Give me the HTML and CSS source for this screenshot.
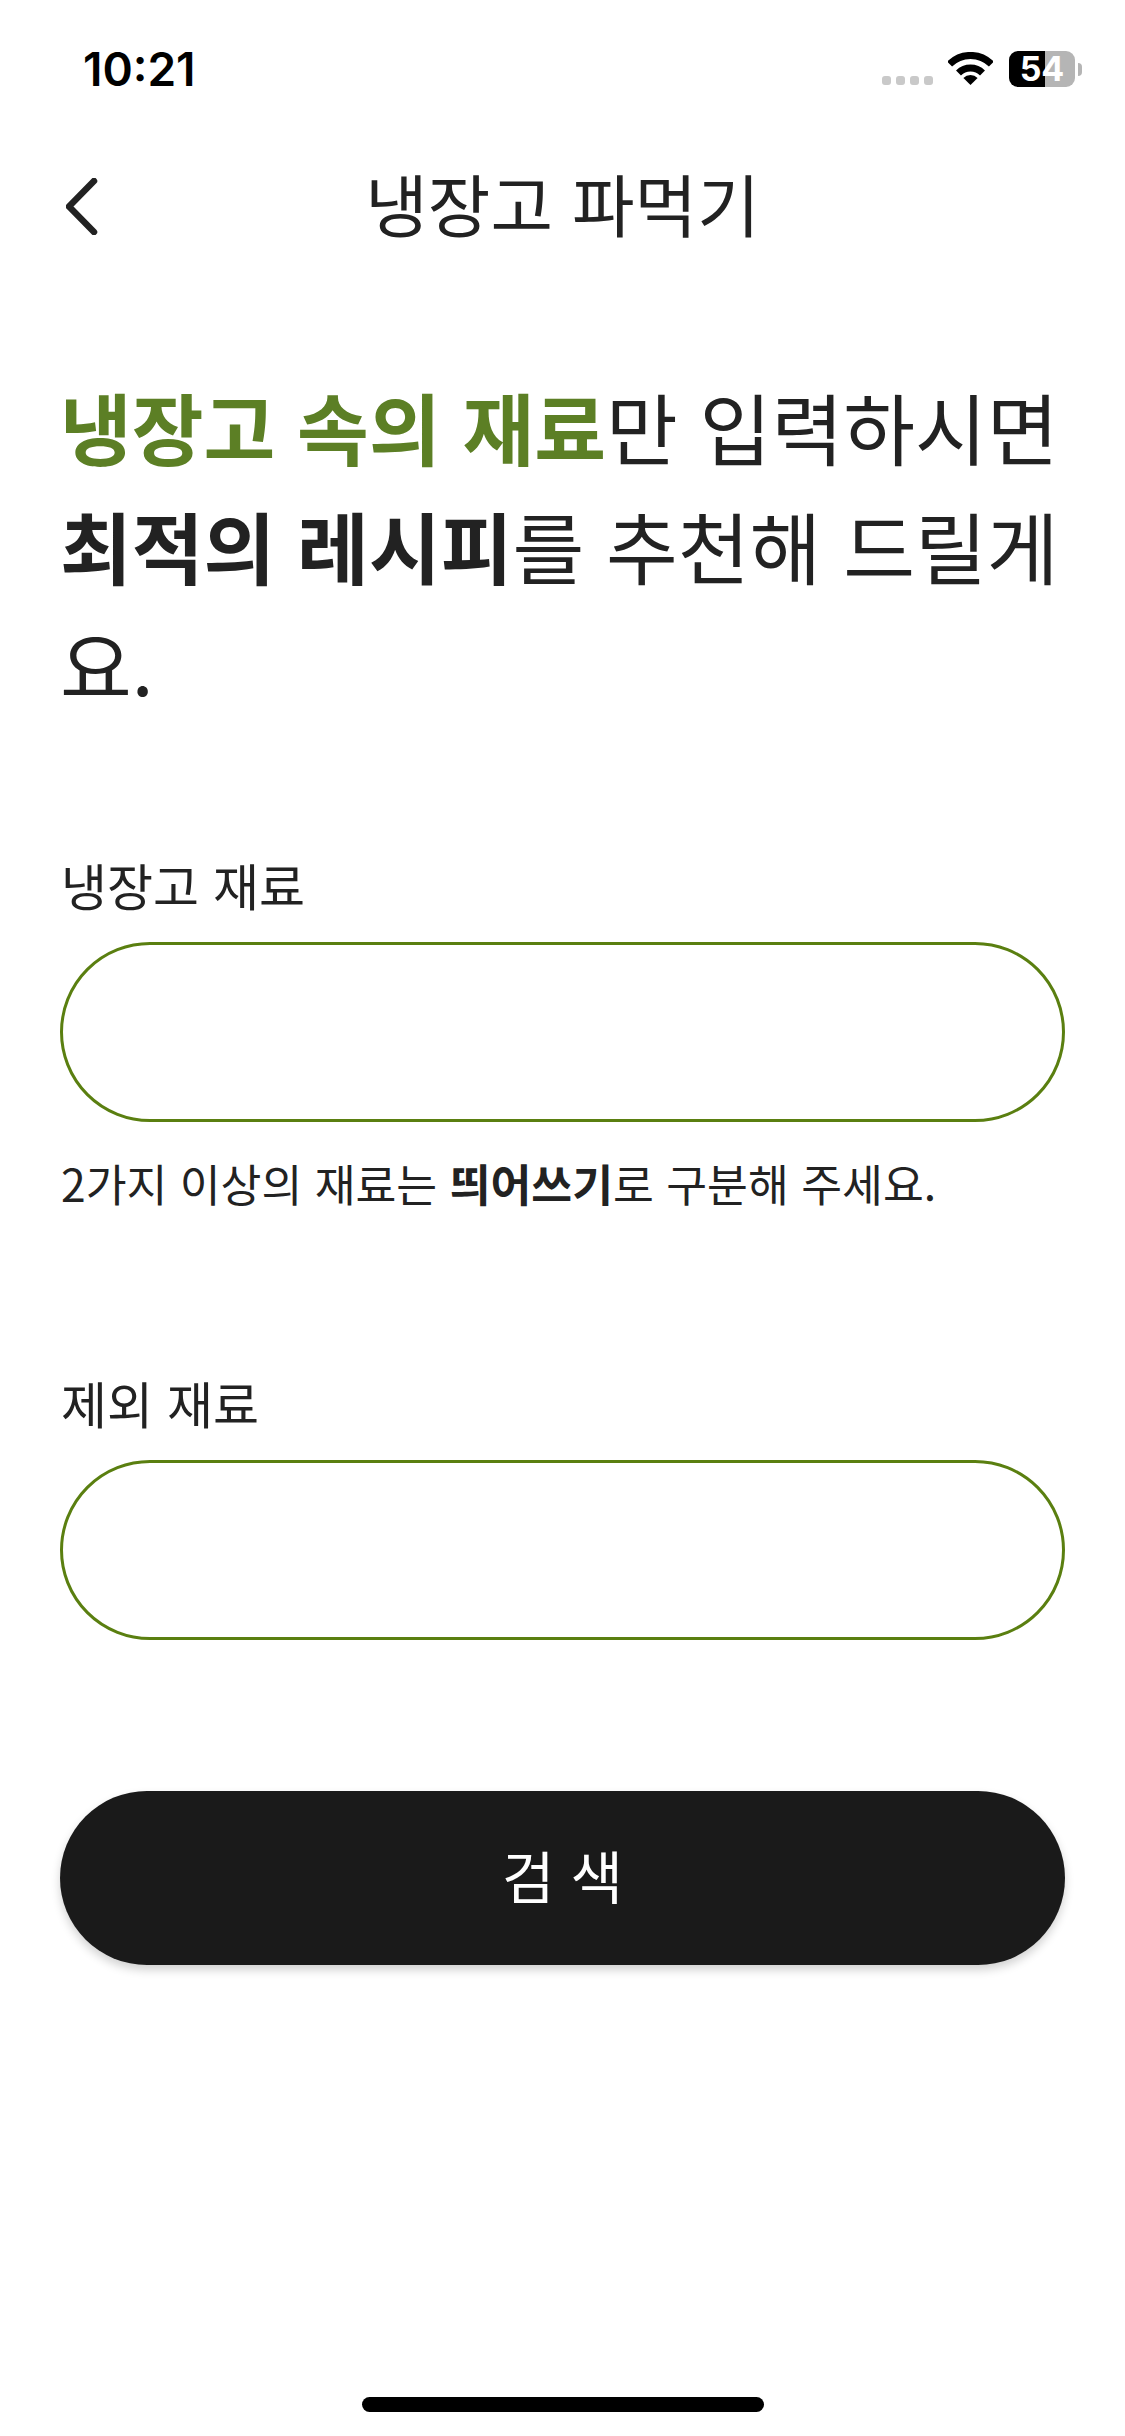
FILE: index.html
```html
<!DOCTYPE html>
<html lang="ko">
<head>
<meta charset="utf-8">
<title>냉장고 파먹기</title>
<link rel="stylesheet" href="styles.css">
</head>
<body>
<div class="screen">
  <div class="status-bar">
    <span class="time">10:21</span>
    <div class="status-icons">
      <div class="signal"><i></i><i></i><i></i><i></i></div>
      <svg class="wifi" viewBox="0 0 45 33" aria-hidden="true">
        <path d="M22.5 33 15.4 25.9A10 10 0 0 1 29.6 25.9Z" fill="#000"/>
        <path d="M10.5 21A17 17 0 0 1 34.5 21M1.6 12.1A29.5 29.5 0 0 1 43.4 12.1" fill="none" stroke="#000" stroke-width="7"/>
      </svg>
      <div class="battery">
        <div class="battery-body"><span class="battery-text">54</span></div>
        <div class="battery-cap"></div>
      </div>
    </div>
  </div>

  <header class="nav">
    <button class="back" aria-label="뒤로">
      <svg viewBox="0 0 35 57" aria-hidden="true">
        <path d="M28 3 3 28.5 28 54" fill="none" stroke="#222" stroke-width="6.5" stroke-linecap="round" stroke-linejoin="round"/>
      </svg>
    </button>
    <h1 class="nav-title">냉장고 파먹기</h1>
    <span class="nav-spacer"></span>
  </header>

  <main class="content">
    <h2 class="headline"><strong class="accent">냉장고 속의 재료</strong>만 입력하시면 <strong>최적의 레시피</strong>를 추천해 드릴게요.</h2>

    <section class="field first">
      <label class="field-label">냉장고 재료</label>
      <div class="input"></div>
      <p class="hint">2가지 이상의 재료는 <strong>띄어쓰기</strong>로 구분해 주세요.</p>
    </section>

    <section class="field second">
      <label class="field-label">제외 재료</label>
      <div class="input"></div>
    </section>

    <button class="search">검 색</button>
  </main>

  <div class="home-indicator"></div>
</div>
</body>
</html>
```
FILE: styles.css
```css
* { box-sizing: border-box; }
html, body { margin: 0; padding: 0; background: #fff; }
body { font-family: "Noto Sans CJK KR", "Noto Sans", sans-serif; color: #222; }
.screen { width: 1125px; height: 2436px; display: flex; flex-direction: column; overflow: hidden; background: #fff; }

.status-bar { height: 138px; padding: 47px 43px 0 83px; display: flex; justify-content: space-between; align-items: flex-start; }
.time { font-family: Inter, "Liberation Sans", sans-serif; font-weight: 600; font-size: 46px; line-height: 44px; color: #000; }
.status-icons { display: flex; align-items: flex-start; padding-top: 4px; }
.signal { display: flex; gap: 5px; margin-top: 25px; margin-right: 15px; }
.signal i { width: 9px; height: 9px; border-radius: 3px; background: #c9c9c9; display: block; }
.wifi { width: 45px; height: 33px; margin-top: 1px; margin-right: 16px; }
.battery { display: flex; align-items: center; }
.battery-body { width: 66px; height: 36px; border-radius: 9px; background: linear-gradient(90deg, #000 0 36px, #b5b5b5 36px 100%); display: flex; align-items: center; justify-content: center; }
.battery-text { color: #fff; font-family: Inter, "Liberation Sans", sans-serif; font-weight: 700; font-size: 34px; line-height: 36px; }
.battery-cap { width: 4px; height: 13px; margin-left: 3px; border-radius: 0 7px 7px 0; background: #b5b5b5; }

.nav { height: 130px; display: grid; grid-template-columns: 120px 1fr 120px; align-items: center; }
.back { padding: 0 0 0 66px; margin: 6px 0 0; border: 0; background: none; display: flex; }
.back svg { width: 35px; height: 57px; display: block; }
.nav-title { margin: 0; text-align: center; font-weight: 400; font-size: 68px; line-height: 80px; color: #222; }

.content { padding: 0 60px; display: flex; flex-direction: column; }
.headline { margin: 99px 0 0; font-weight: 400; font-size: 78px; line-height: 119px; color: #222; }
.headline strong { font-weight: 700; }
.accent { color: #5c7f25; }

.field { display: flex; flex-direction: column; }
.first { margin-top: 124px; }
.second { margin-top: 150px; }
.field-label { font-size: 50px; line-height: 72px; color: #222; padding-left: 1px; }
.input { margin-top: 22px; height: 180px; border: 3px solid #5a7f10; border-radius: 90px; background: #fff; }
.hint { margin: 28px 0 0; padding-left: 1px; font-size: 44.4px; line-height: 66px; color: #222; white-space: nowrap; }
.hint strong { font-weight: 700; }

.search { margin-top: 151px; height: 174px; border: 0; border-radius: 87px; background: #1a1a1a; color: #fff; font-family: inherit; font-size: 57px; line-height: 166px; padding: 0 0 8px; box-shadow: 0 5px 10px rgba(0, 0, 0, .18); }

.home-indicator { margin: auto auto 24px; width: 402px; height: 15px; border-radius: 8px; background: #000; }
```
